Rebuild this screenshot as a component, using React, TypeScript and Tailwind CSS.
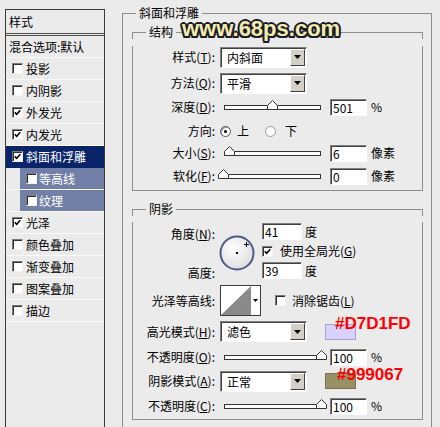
import type { ReactNode } from 'react';

type Item = { label: string; on?: boolean; active?: boolean; sub?: boolean };

const items: Item[] = [
  { label: '投影' },
  { label: '内阴影' },
  { label: '外发光', on: true },
  { label: '内发光', on: true },
  { label: '斜面和浮雕', on: true, active: true },
  { label: '等高线', sub: true },
  { label: '纹理', sub: true },
  { label: '光泽', on: true },
  { label: '颜色叠加' },
  { label: '渐变叠加' },
  { label: '图案叠加' },
  { label: '描边' },
];

export default function App() {
  return (
    <div className="relative flex h-[427px] w-[440px] overflow-hidden bg-[#ebebeb] font-['Noto_Sans_CJK_SC',sans-serif] text-[12px] text-black">
      {/* style list */}
      <div className="ml-[5px] mt-[9px] w-[100px] shrink-0 border-l border-r border-t border-[#3a3a3a]">
        <div className="flex h-[26px] items-center border-b-[3px] border-double border-[#505050] pl-[3px]">样式</div>
        <div className="flex h-[22px] items-center border-b border-[#fafafa] pl-[3px]">混合选项:默认</div>
        {items.map((it) =>
          it.sub ? (
            <div key={it.label} className="h-[22px] border-b border-[#fafafa] pl-[14px]">
              <div className="flex h-full items-center bg-[#7280a8] pl-[6px] text-white">
                <Box />
                <span className="ml-[2px]">{it.label}</span>
              </div>
            </div>
          ) : (
            <div
              key={it.label}
              className={`flex h-[22px] items-center border-b pl-[6px] ${
                it.active ? 'border-[#0a246a] bg-[#0a246a] text-white' : 'border-[#fafafa]'
              }`}
            >
              <Box on={it.on} />
              <span className="ml-[3px]">{it.label}</span>
            </div>
          )
        )}
      </div>

      {/* bevel & emboss */}
      <div className="ml-[17px] mt-[6px] flex w-[310px] shrink-0 flex-col">
        <GroupHead title="斜面和浮雕" />
        <div className="flex-1 border-l border-r border-[#8d8d8d] pl-[9px] pr-[8px]">
          <div className="mt-[5px]">
            <GroupHead title="结构" />
            <div className="border-b border-l border-r border-[#8d8d8d] pb-[4px]">
              <Row className="mt-[7px] h-[22px]" label={<>样式(<u>T</u>):</>}>
                <Select value="内斜面" />
              </Row>
              <Row className="mt-[4px] h-[22px]" label={<>方法(<u>Q</u>):</>}>
                <Select value="平滑" />
              </Row>
              <Row className="mt-[3px] h-[20px]" label={<>深度(<u>D</u>):</>}>
                <Slider at={48} />
                <Input value="501" className="ml-[9px]" />
                <span className="ml-[4px]">%</span>
              </Row>
              <Row className="mt-[4px] h-[20px]" label="方向:">
                <Radio on />
                <span className="ml-[6px]">上</span>
                <Radio className="ml-[16px]" />
                <span className="ml-[9px]">下</span>
              </Row>
              <Row className="mt-[2px] h-[20px]" label={<>大小(<u>S</u>):</>}>
                <Slider at={5} />
                <Input value="6" className="ml-[9px]" />
                <span className="ml-[4px]">像素</span>
              </Row>
              <Row className="mt-[3px] h-[20px]" label={<>软化(<u>F</u>):</>}>
                <Slider at={-1} />
                <Input value="0" className="ml-[9px]" />
                <span className="ml-[4px]">像素</span>
              </Row>
            </div>
          </div>

          <div className="mt-[11px]">
            <GroupHead title="阴影" />
            <div className="border-b border-l border-r border-[#8d8d8d] pb-[3px]">
              <div className="mt-[6px] flex h-[58px]">
                <div className="flex w-[82px] shrink-0 flex-col justify-between pt-[5px] text-right">
                  <div className="leading-[14px]">角度(<u>N</u>):</div>
                  <div className="leading-[14px]">高度:</div>
                </div>
                <svg className="ml-[4px] mt-[13px]" width="36" height="36" viewBox="0 0 36 36">
                  <defs>
                    <radialGradient id="dial" cx="40%" cy="35%" r="70%">
                      <stop offset="0" stopColor="#ffffff" />
                      <stop offset="1" stopColor="#dcdcdc" />
                    </radialGradient>
                  </defs>
                  <circle cx="18" cy="18" r="16.5" fill="url(#dial)" stroke="#4b5a88" strokeWidth="2" />
                  <rect x="17" y="17" width="2" height="2" fill="#000" />
                  <path d="M25 9.5h5M27.5 7v5" stroke="#000" strokeWidth="1" />
                </svg>
                <div className="ml-[7px] flex flex-col">
                  <div className="flex h-[19px] items-center">
                    <Input value="41" className="w-[40px]" />
                    <span className="ml-[3px]">度</span>
                  </div>
                  <div className="flex h-[20px] items-center">
                    <Box on />
                    <span className="ml-[7px]">使用全局光(<u>G</u>)</span>
                  </div>
                  <div className="flex h-[19px] items-center">
                    <Input value="39" className="w-[40px]" />
                    <span className="ml-[3px]">度</span>
                  </div>
                </div>
              </div>

              <Row className="mt-[5px] h-[31px]" label="光泽等高线:">
                <div className="flex h-[31px] w-[41px] border border-[#3c3c3c] bg-white">
                  <svg width="30" height="29" viewBox="0 0 30 29">
                    <path d="M0 29L30 0V29Z" fill="#8a8a8a" />
                  </svg>
                  <div className="flex flex-1 items-center justify-center">
                    <svg width="5" height="3" viewBox="0 0 5 3">
                      <path d="M0 0h5L2.5 3z" fill="#000" />
                    </svg>
                  </div>
                </div>
                <Box className="ml-[14px]" />
                <span className="ml-[6px]">消除锯齿(<u>L</u>)</span>
              </Row>

              <Row className="mt-[4px] h-[23px]" label={<>高光模式(<u>H</u>):</>}>
                <Select value="滤色" />
                <span className="ml-[18px] h-[16px] w-[31px] border border-[#a6a2cc] bg-[#d7d1fd]" />
              </Row>
              <Row className="mt-[4px] h-[20px]" label={<>不透明度(<u>O</u>):</>}>
                <Slider at={97} />
                <Input value="100" className="ml-[9px]" />
                <span className="ml-[4px]">%</span>
              </Row>
              <Row className="mt-[3px] h-[22px]" label={<>阴影模式(<u>A</u>):</>}>
                <Select value="正常" />
                <span className="ml-[18px] h-[16px] w-[31px] border border-[#7a7352] bg-[#999067]" />
              </Row>
              <Row className="mt-[4px] h-[20px]" label={<>不透明度(<u>C</u>):</>}>
                <Slider at={97} />
                <Input value="100" className="ml-[9px]" />
                <span className="ml-[4px]">%</span>
              </Row>
            </div>
          </div>
        </div>
      </div>

      {/* watermark + colour notes laid over the dialog */}
      <span className="absolute left-[182px] top-[18px] whitespace-nowrap font-['Liberation_Sans',sans-serif] text-[22px] font-bold leading-[22px] text-[#f3edad] [text-shadow:2px_0_0_#1c1c2a,-2px_0_0_#1c1c2a,0_2px_0_#1c1c2a,0_-2px_0_#1c1c2a,1.5px_1.5px_0_#1c1c2a,-1.5px_1.5px_0_#1c1c2a,1.5px_-1.5px_0_#1c1c2a,-1.5px_-1.5px_0_#1c1c2a]">
        www.68ps.com
      </span>
      <span className="absolute left-[335px] top-[315px] font-['Liberation_Sans',sans-serif] text-[17px] font-bold leading-[17px] text-[#ff0000]">
        #D7D1FD
      </span>
      <span className="absolute left-[337px] top-[366px] font-['Liberation_Sans',sans-serif] text-[17px] font-bold leading-[17px] text-[#ff0000]">
        #999067
      </span>
    </div>
  );
}

function GroupHead({ title }: { title: string }) {
  return (
    <div className="flex h-[14px]">
      <div className="mt-[7px] h-[7px] w-[14px] border-l border-t border-[#8d8d8d]" />
      <span className="px-[3px] leading-[14px]">{title}</span>
      <div className="mt-[7px] h-[7px] flex-1 border-r border-t border-[#8d8d8d]" />
    </div>
  );
}

function Row({ label, className = '', children }: { label: ReactNode; className?: string; children: ReactNode }) {
  return (
    <div className={`flex items-center ${className}`}>
      <div className="w-[82px] shrink-0 text-right">{label}</div>
      <div className="ml-[5px] flex items-center">{children}</div>
    </div>
  );
}

function Box({ on = false, className = '' }: { on?: boolean; className?: string }) {
  return (
    <span
      className={`inline-flex h-[11px] w-[11px] shrink-0 items-center justify-center border border-b-[#f4f4f4] border-l-[#7a7a7a] border-r-[#f4f4f4] border-t-[#7a7a7a] bg-white shadow-[inset_1px_1px_0_#303030] ${className}`}
    >
      {on && (
        <svg width="7" height="7" viewBox="0 0 7 7">
          <path d="M0.8 3.2L2.6 5.2L6.3 1.2" fill="none" stroke="#000" strokeWidth="1.6" />
        </svg>
      )}
    </span>
  );
}

function Radio({ on = false, className = '' }: { on?: boolean; className?: string }) {
  return (
    <span
      className={`inline-flex h-[11px] w-[11px] shrink-0 items-center justify-center rounded-full border bg-white ${
        on ? 'border-[#555] shadow-[inset_1px_1px_0_#999]' : 'border-[#9a9a9a]'
      } ${className}`}
    >
      {on && <span className="h-[3px] w-[3px] rounded-full bg-black" />}
    </span>
  );
}

function Select({ value }: { value: string }) {
  return (
    <div className="flex h-[21px] w-[87px] border border-b-white border-l-[#808080] border-r-white border-t-[#808080] bg-white shadow-[inset_1px_1px_0_#404040]">
      <span className="flex-1 pl-[6px] leading-[19px]">{value}</span>
      <span className="m-[1px] flex w-[15px] items-center justify-center border border-b-[#404040] border-l-white border-r-[#404040] border-t-white bg-[#d4d0c8]">
        <svg width="7" height="4" viewBox="0 0 7 4">
          <path d="M0 0h7L3.5 4z" fill="#000" />
        </svg>
      </span>
    </div>
  );
}

function Input({ value, className = '' }: { value: string; className?: string }) {
  return (
    <span
      className={`flex h-[17px] w-[37px] items-center border border-b-white border-l-[#808080] border-r-white border-t-[#808080] bg-white pl-[2px] leading-[15px] shadow-[inset_1px_1px_0_#404040] ${className}`}
    >
      {value}
    </span>
  );
}

function Slider({ at }: { at: number }) {
  return (
    <div className="relative ml-[4px] h-[5px] w-[97px] border border-[#333] bg-white">
      <svg className="absolute top-[-6px]" style={{ left: at - 6 }} width="11" height="10" viewBox="0 0 11 10">
        <path d="M5.5 0.5L10.5 5.5V9.5H0.5V5.5Z" fill="#fbfbfb" stroke="#333" />
      </svg>
    </div>
  );
}
